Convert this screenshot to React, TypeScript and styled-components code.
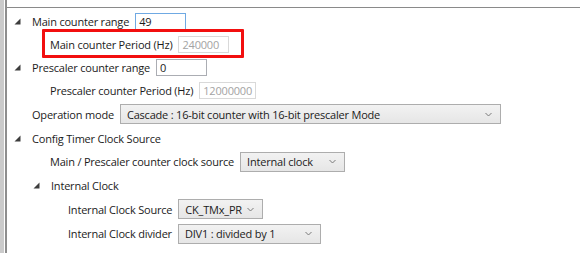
import styled, { createGlobalStyle } from 'styled-components';

const GlobalStyle = createGlobalStyle`
  html, body {
    margin: 0;
    padding: 0;
    background: #ffffff;
  }
  body {
    font-family: "Open Sans", "Noto Sans", sans-serif;
    font-size: 11px;
    letter-spacing: -0.2px;
    color: #1b1b1b;
  }
`;

const Page = styled.div`
  display: flex;
  width: 580px;
  height: 253px;
  overflow: hidden;
`;

const Strip = styled.div`
  width: 4px;
  flex: none;
  background: #cbcbcb;
  margin-right: 1px;
`;

const Main = styled.div`
  flex: 1;
  border-left: 2px solid #8e8e8e;
  padding-top: 7px;
`;

const Panel = styled.div`
  border-top: 1px solid #8a8a8a;
  padding-top: 2px;
`;

const Row = styled.div<{ level: number; h: number }>`
  display: flex;
  align-items: center;
  height: ${(p) => p.h}px;
  padding-left: ${(p) => 7 + p.level * 18}px;
`;

const Expander = styled.span<{ level: number }>`
  width: 18px;
  flex: none;
  display: flex;
  align-items: center;
  padding-left: ${(p) => (p.level > 0 ? 1 : 0)}px;
  svg {
    display: block;
  }
`;

const Spacer = styled.span`
  width: 18px;
  flex: none;
`;

const Label = styled.span`
  white-space: nowrap;
  margin-right: 6px;
`;

const Highlight = styled.div`
  position: relative;
  display: flex;
  align-items: center;
  &::after {
    content: '';
    position: absolute;
    top: -7px;
    bottom: -5px;
    left: -8px;
    right: -15px;
    border: 3px solid #f20f0f;
    border-radius: 1px;
    pointer-events: none;
  }
`;

const TextBox = styled.div<{ focused?: boolean; disabled?: boolean }>`
  box-sizing: border-box;
  min-width: 51px;
  height: 17px;
  padding: 0 3px;
  display: flex;
  align-items: center;
  white-space: nowrap;
  border: 1px solid ${(p) => (p.focused ? '#6fa9e3' : p.disabled ? '#d9d9d9' : '#abadb3')};
  color: ${(p) => (p.disabled ? '#a3a3a3' : '#1b1b1b')};
  background: #ffffff;
`;

const Select = styled.div<{ w: number }>`
  box-sizing: border-box;
  width: ${(p) => p.w}px;
  flex: none;
  height: 20px;
  padding: 0 8px 0 6px;
  display: flex;
  align-items: center;
  gap: 4px;
  white-space: nowrap;
  border: 1px solid #adadad;
  background: linear-gradient(#f2f2f2, #e6e6e6);
  color: #1b1b1b;
`;

const SelectText = styled.span`
  flex: 1;
  overflow: hidden;
`;

const Chevron = () => (
  <svg width="7" height="5" viewBox="0 0 7 5" style={{ flex: 'none' }}>
    <path d="M0.5 1 L3.5 4 L6.5 1" fill="none" stroke="#7a7a7a" strokeWidth="1" />
  </svg>
);

const Triangle = () => (
  <svg width="7" height="7" viewBox="0 0 7 7">
    <polygon points="6.5,0.5 6.5,6.5 0.5,6.5" fill="#3d3d3d" />
  </svg>
);

const Combo = ({ w, value }: { w: number; value: string }) => (
  <Select w={w}>
    <SelectText>{value}</SelectText>
    <Chevron />
  </Select>
);

const Node = ({ level, label, h, children }: { level: number; label: string; h: number; children?: React.ReactNode }) => (
  <Row level={level} h={h}>
    <Expander level={level}><Triangle /></Expander>
    <Label>{label}</Label>
    {children}
  </Row>
);

const Leaf = ({ level, label, h, children }: { level: number; label: string; h: number; children?: React.ReactNode }) => (
  <Row level={level} h={h}>
    <Spacer />
    <Label>{label}</Label>
    {children}
  </Row>
);

export default function App() {
  return (
    <>
      <GlobalStyle />
      <Page>
        <Strip />
        <Main>
          <Panel>
            <Node level={0} label="Main counter range" h={23}>
              <TextBox focused>49</TextBox>
            </Node>
            <Row level={1} h={23}>
              <Spacer />
              <Highlight>
                <Label>Main counter Period (Hz)</Label>
                <TextBox disabled>240000</TextBox>
              </Highlight>
            </Row>
            <Node level={0} label="Prescaler counter range" h={22}>
              <TextBox>0</TextBox>
            </Node>
            <Leaf level={1} label="Prescaler counter Period (Hz)" h={24}>
              <TextBox disabled>12000000</TextBox>
            </Leaf>
            <Leaf level={0} label="Operation mode" h={24}>
              <Combo w={381} value="Cascade : 16-bit counter with 16-bit prescaler Mode" />
            </Leaf>
            <Node level={0} label="Config Timer Clock Source" h={24} />
            <Leaf level={1} label="Main / Prescaler counter clock source" h={23}>
              <Combo w={105} value="Internal clock" />
            </Leaf>
            <Node level={1} label="Internal Clock" h={24} />
            <Leaf level={2} label="Internal Clock Source" h={24}>
              <Combo w={85} value="CK_TMx_PR" />
            </Leaf>
            <Leaf level={2} label="Internal Clock divider" h={25}>
              <Combo w={143} value="DIV1 : divided by 1" />
            </Leaf>
          </Panel>
        </Main>
      </Page>
    </>
  );
}
